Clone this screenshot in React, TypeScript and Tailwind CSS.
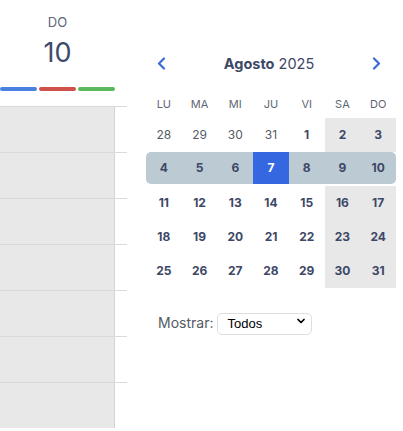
import React from 'react'
import { ChevronDown } from 'lucide-react'

type Day = { n: number; other?: boolean }

const weeks: Day[][] = [
  [{ n: 28, other: true }, { n: 29, other: true }, { n: 30, other: true }, { n: 31, other: true }, { n: 1 }, { n: 2 }, { n: 3 }],
  [{ n: 4 }, { n: 5 }, { n: 6 }, { n: 7 }, { n: 8 }, { n: 9 }, { n: 10 }],
  [{ n: 11 }, { n: 12 }, { n: 13 }, { n: 14 }, { n: 15 }, { n: 16 }, { n: 17 }],
  [{ n: 18 }, { n: 19 }, { n: 20 }, { n: 21 }, { n: 22 }, { n: 23 }, { n: 24 }],
  [{ n: 25 }, { n: 26 }, { n: 27 }, { n: 28 }, { n: 29 }, { n: 30 }, { n: 31 }],
]

const weekdays = ['LU', 'MA', 'MI', 'JU', 'VI', 'SA', 'DO']

const DayColumn: React.FC = () => (
  <div className="w-[127px] shrink-0">
    <div className="flex h-[106px] w-[115px] flex-col items-center">
      <div className="mt-[14px] text-[13px] leading-[16px] text-[#5b6478]">DO</div>
      <div className="mt-[7px] text-[27px] leading-[32px] text-[#3d4a6b]">10</div>
      <div className="mt-[18px] flex w-full gap-[2px]">
        <div className="h-[3.5px] flex-1 rounded-full bg-[#4a80e0]" />
        <div className="h-[3.5px] flex-1 rounded-full bg-[#d0504a]" />
        <div className="h-[3.5px] flex-1 rounded-full bg-[#5cb85c]" />
      </div>
    </div>
    {Array.from({ length: 7 }).map((_, i) => (
      <div key={i} className="flex h-[46px] border-t border-[#dadada]">
        <div className="w-[115px] border-r border-[#d4d4d4] bg-[#e8e8e8]" />
      </div>
    ))}
  </div>
)

const Chevron: React.FC<{ dir: 'left' | 'right' }> = ({ dir }) => (
  <svg width="9" height="13" viewBox="0 0 9 13" fill="none">
    <polyline
      points={dir === 'left' ? '7,1.5 2,6.5 7,11.5' : '2,1.5 7,6.5 2,11.5'}
      stroke="#3a6bd8"
      strokeWidth="2.2"
      strokeLinecap="round"
      strokeLinejoin="round"
    />
  </svg>
)

const MiniCalendar: React.FC = () => (
  <div className="ml-[19px] w-[250px] shrink-0">
    <div className="mt-[50px] flex h-[27px] items-center justify-between pl-[11px] pr-[15px]">
      <Chevron dir="left" />
      <div className="text-[14.5px] text-[#3d4766]">
        <span className="font-bold">Agosto</span> 2025
      </div>
      <Chevron dir="right" />
    </div>

    <div className="mt-[14px] grid h-[27px] grid-cols-7 items-center">
      {weekdays.map((w) => (
        <div key={w} className="text-center text-[11px] text-[#5f6672]">
          {w}
        </div>
      ))}
    </div>

    {weeks.map((week, wi) => {
      const current = wi === 1
      return (
        <div
          key={wi}
          className={`grid grid-cols-7 ${current ? 'mb-[2px] h-[32px] overflow-hidden rounded-[5px] bg-[#bccad3]' : 'h-[34px]'}`}
        >
          {week.map((day, di) => {
            const selected = current && day.n === 7
            const weekend = di >= 5 && !current
            return (
              <div
                key={di}
                className={`flex items-center justify-center text-[12px] ${
                  selected
                    ? 'bg-[#3567e0] font-bold text-white'
                    : day.other
                      ? 'text-[#555a63]'
                      : 'font-bold text-[#3d4766]'
                } ${weekend ? 'bg-[#e8e8e8]' : ''}`}
              >
                {day.n}
              </div>
            )
          })}
        </div>
      )
    })}

    <div className="mt-[22px] flex items-center pl-[12px]">
      <span className="text-[14px] text-[#555a63]">Mostrar:</span>
      <div className="relative ml-[4px]">
        <select className="h-[22px] w-[95px] appearance-none rounded-[5px] border border-[#dedede] bg-white pl-[9px] font-['Liberation_Sans',sans-serif] text-[13px] text-black">
          <option>Todos</option>
        </select>
        <ChevronDown
          size={12}
          strokeWidth={3.5}
          className="pointer-events-none absolute right-[5px] top-[5px] text-black"
        />
      </div>
    </div>
  </div>
)

export default function App() {
  return (
    <div className="flex h-[431px] w-[403px] overflow-hidden bg-white font-['Inter',sans-serif]">
      <DayColumn />
      <MiniCalendar />
    </div>
  )
}
